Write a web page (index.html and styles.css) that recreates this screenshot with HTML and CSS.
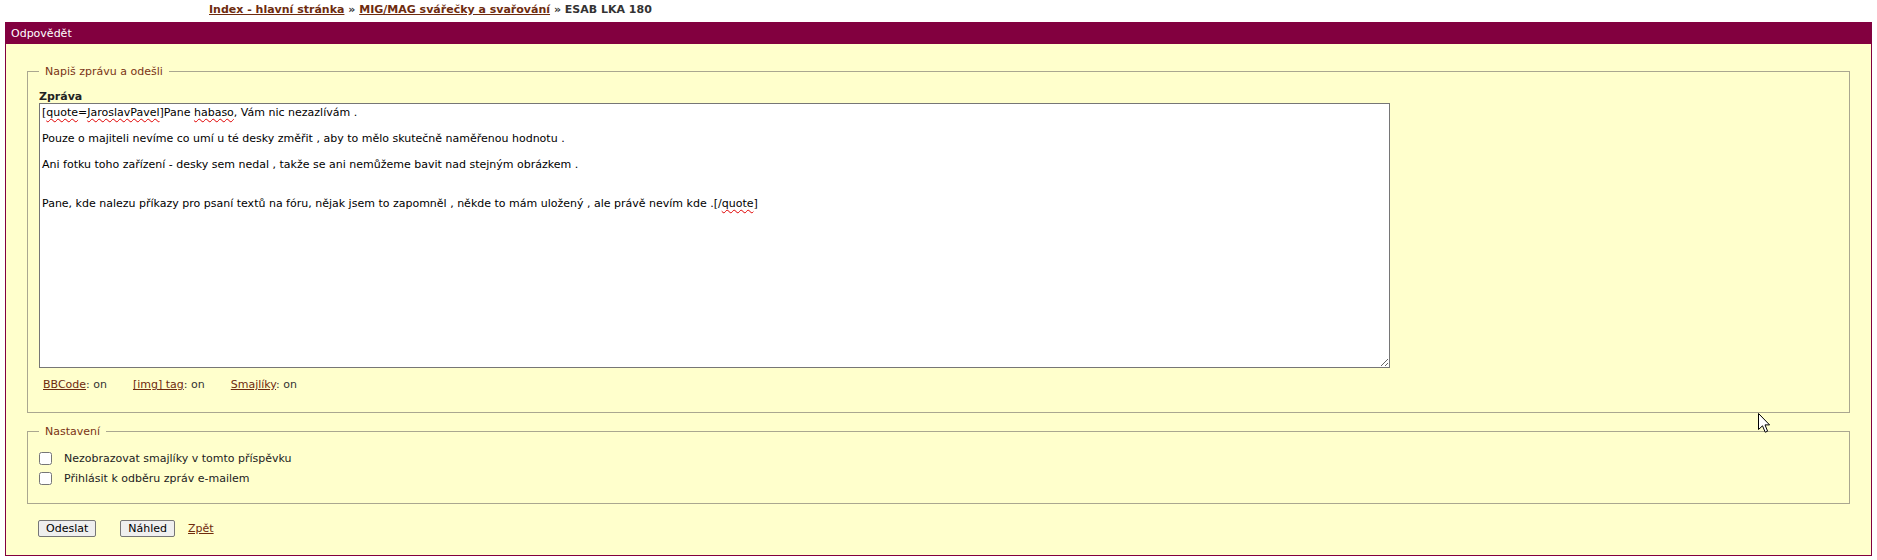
FILE: index.html
```html
<!DOCTYPE html>
<html lang="cs">
<head>
    <meta charset="UTF-8">
    <meta name="viewport" content="width=device-width, initial-scale=1.0">
    <title>Odpovědět - ESAB LKA 180</title>
    <link rel="stylesheet" href="styles.css">
</head>
<body>
    <div class="breadcrumb">
        <a href="#">Index - hlavní stránka</a> » <a href="#">MIG/MAG svářečky a svařování</a> » ESAB LKA 180
    </div>

    <div class="panel">
        <div class="panel-head">Odpovědět</div>

        <form class="panel-body" onsubmit="return false">
            <fieldset class="group">
                <legend>Napiš zprávu a odešli</legend>
                <div class="field-label">Zpráva</div>
                <div class="message">[<span class="typo">quote</span>=<span class="typo">JaroslavPavel</span>]Pane <span class="typo">habaso</span>, Vám nic nezazlívám .

Pouze o majiteli nevíme co umí u té desky změřit , aby to mělo skutečně naměřenou hodnotu .

Ani fotku toho zařízení - desky sem nedal , takže se ani nemůžeme bavit nad stejným obrázkem .


Pane, kde nalezu příkazy pro psaní textů na fóru, nějak jsem to zapomněl , někde to mám uložený , ale právě nevím kde .[/<span class="typo">quote</span>]</div>
                <div class="options">
                    <span><a href="#">BBCode</a>: on</span>
                    <span><a href="#">[img] tag</a>: on</span>
                    <span><a href="#">Smajlíky</a>: on</span>
                </div>
            </fieldset>

            <fieldset class="group settings">
                <legend>Nastavení</legend>
                <label class="check"><input type="checkbox">Nezobrazovat smajlíky v tomto příspěvku</label>
                <label class="check"><input type="checkbox">Přihlásit k odběru zpráv e-mailem</label>
            </fieldset>

            <div class="actions">
                <button type="submit" class="send">Odeslat</button>
                <button type="button" class="preview">Náhled</button>
                <a href="#">Zpět</a>
            </div>
        </form>
    </div>

    <!-- mouse pointer caught in the screenshot -->
    <svg class="cursor" width="12" height="20" viewBox="0 0 12 20">
        <path d="M0.5 0.5 L0.5 16.5 L4.5 12.8 L7.2 19.2 L9.6 18.2 L7 11.9 L11.6 11.9 Z" fill="#fff" stroke="#000" stroke-width="1"/>
    </svg>
</body>
</html>
```

FILE: styles.css
```css
body {
    margin: 0;
    font-family: "DejaVu Sans", Verdana, sans-serif;
    font-size: 11px;
    color: #1a1a1a;
    background-color: #fff;
    position: relative;
}

a {
    color: #6e2b0e;
}

/* Top navigation */
.breadcrumb {
    padding: 0 0 3px 209px;
    line-height: 19px;
    font-weight: bold;
    color: #333;
}

/* Reply panel */
.panel {
    margin: 0 5px;
    border: 1px solid #82003f;
    background-color: #ffffcc;
}

.panel-head {
    height: 21px;
    padding-left: 5px;
    line-height: 21px;
    color: #fff;
    background-color: #82003f;
}

.panel-body {
    margin: 0;
    padding: 21px 21px 18px;
}

/* Fieldsets */
.group {
    margin: 0;
    padding: 12px 11px 21px;
    border: 1px solid #aaa790;
}

.group legend {
    padding: 0 6px;
    line-height: 13px;
    color: #7a3415;
}

.field-label {
    line-height: 13px;
    font-weight: bold;
    color: #222;
}

/* Message box, drawn like a textarea so the spelling marks show */
.message {
    box-sizing: border-box;
    width: 1351px;
    height: 265px;
    padding: 2px;
    border: 1px solid #767676;
    background-color: #fff;
    color: #000;
    line-height: 13px;
    white-space: pre-wrap;
    overflow: auto;
    resize: both;
}

.typo {
    text-decoration: underline wavy #e00000;
    text-decoration-thickness: 1px;
    text-underline-offset: 2px;
}

.options {
    display: flex;
    gap: 26px;
    margin-top: 10px;
    padding-left: 4px;
    line-height: 13px;
    color: #333;
}

/* Settings */
.settings {
    margin-top: 12px;
    padding-top: 10px;
    padding-bottom: 15px;
}

.check {
    display: flex;
    align-items: center;
    height: 20px;
    color: #222;
}

.check input {
    width: 13px;
    height: 13px;
    margin: 0 12px 0 0;
}

/* Buttons */
.actions {
    display: flex;
    align-items: center;
    margin-top: 16px;
    padding-left: 11px;
}

button {
    padding: 1px 7px;
    font-family: "DejaVu Sans", Verdana, sans-serif;
    font-size: 11px;
    line-height: 13px;
    color: #000;
    background-color: #efefef;
    border: 1px solid #767676;
    border-radius: 2px;
}

.send {
    margin-right: 24px;
}

.preview {
    margin-right: 13px;
}

.cursor {
    position: absolute;
    left: 1758px;
    top: 413px;
}
```
